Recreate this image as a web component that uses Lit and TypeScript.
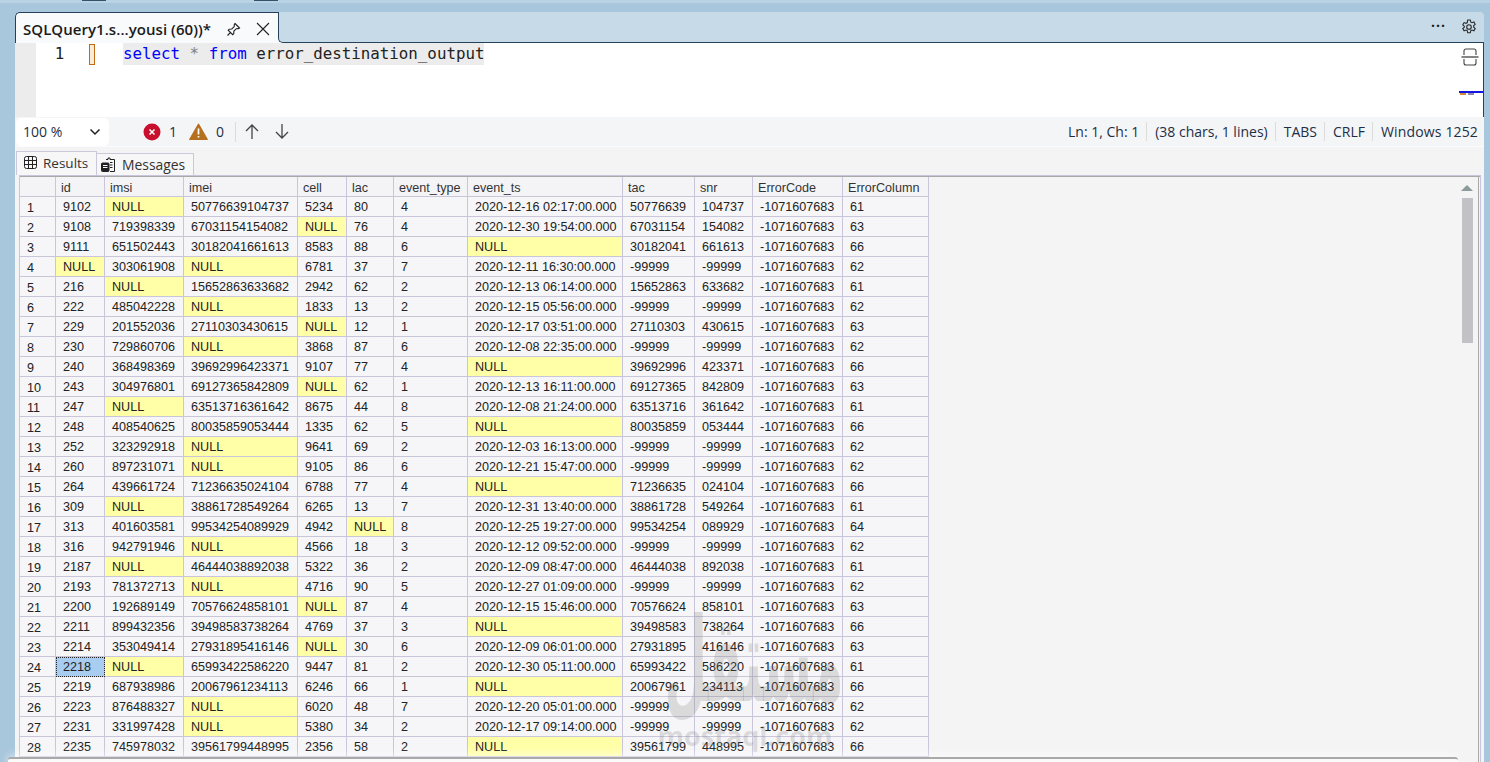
import { LitElement, html, css, svg } from "lit";
import { customElement } from "lit/decorators.js";

const N = "NULL";
const M = "-1071607683";
const rows: string[][] = [
  ["9102",N,"50776639104737","5234","80","4","2020-12-16 02:17:00.000","50776639","104737",M,"61"],
  ["9108","719398339","67031154154082",N,"76","4","2020-12-30 19:54:00.000","67031154","154082",M,"63"],
  ["9111","651502443","30182041661613","8583","88","6",N,"30182041","661613",M,"66"],
  [N,"303061908",N,"6781","37","7","2020-12-11 16:30:00.000","-99999","-99999",M,"62"],
  ["216",N,"15652863633682","2942","62","2","2020-12-13 06:14:00.000","15652863","633682",M,"61"],
  ["222","485042228",N,"1833","13","2","2020-12-15 05:56:00.000","-99999","-99999",M,"62"],
  ["229","201552036","27110303430615",N,"12","1","2020-12-17 03:51:00.000","27110303","430615",M,"63"],
  ["230","729860706",N,"3868","87","6","2020-12-08 22:35:00.000","-99999","-99999",M,"62"],
  ["240","368498369","39692996423371","9107","77","4",N,"39692996","423371",M,"66"],
  ["243","304976801","69127365842809",N,"62","1","2020-12-13 16:11:00.000","69127365","842809",M,"63"],
  ["247",N,"63513716361642","8675","44","8","2020-12-08 21:24:00.000","63513716","361642",M,"61"],
  ["248","408540625","80035859053444","1335","62","5",N,"80035859","053444",M,"66"],
  ["252","323292918",N,"9641","69","2","2020-12-03 16:13:00.000","-99999","-99999",M,"62"],
  ["260","897231071",N,"9105","86","6","2020-12-21 15:47:00.000","-99999","-99999",M,"62"],
  ["264","439661724","71236635024104","6788","77","4",N,"71236635","024104",M,"66"],
  ["309",N,"38861728549264","6265","13","7","2020-12-31 13:40:00.000","38861728","549264",M,"61"],
  ["313","401603581","99534254089929","4942",N,"8","2020-12-25 19:27:00.000","99534254","089929",M,"64"],
  ["316","942791946",N,"4566","18","3","2020-12-12 09:52:00.000","-99999","-99999",M,"62"],
  ["2187",N,"46444038892038","5322","36","2","2020-12-09 08:47:00.000","46444038","892038",M,"61"],
  ["2193","781372713",N,"4716","90","5","2020-12-27 01:09:00.000","-99999","-99999",M,"62"],
  ["2200","192689149","70576624858101",N,"87","4","2020-12-15 15:46:00.000","70576624","858101",M,"63"],
  ["2211","899432356","39498583738264","4769","37","3",N,"39498583","738264",M,"66"],
  ["2214","353049414","27931895416146",N,"30","6","2020-12-09 06:01:00.000","27931895","416146",M,"63"],
  ["2218",N,"65993422586220","9447","81","2","2020-12-30 05:11:00.000","65993422","586220",M,"61"],
  ["2219","687938986","20067961234113","6246","66","1",N,"20067961","234113",M,"66"],
  ["2223","876488327",N,"6020","48","7","2020-12-20 05:01:00.000","-99999","-99999",M,"62"],
  ["2231","331997428",N,"5380","34","2","2020-12-17 09:14:00.000","-99999","-99999",M,"62"],
  ["2235","745978032","39561799448995","2356","58","2",N,"39561799","448995",M,"66"],
];
const heads = ["id","imsi","imei","cell","lac","event_type","event_ts","tac","snr","ErrorCode","ErrorColumn"];
// The 29th row is only a sliver under the bottom panel: its cells are drawn without text.
const sliver = [false,false,true,false,false,false,true,false,false,false,false];

@customElement("app-root")
export class AppRoot extends LitElement {
  static styles = css`
    :host { display: block; width: 1490px; height: 762px; overflow: hidden; position: relative; background: #a8c6dc; font-family: "Open Sans", "Noto Sans", sans-serif; color: #1a1a1a; }
    .top { height: 12px; position: relative; background: linear-gradient(#b9d2e4 0 3px, #a8c6dc 3px); display: flex; }
    .top i { display: block; height: 1px; width: 24px; background: #33536c; }
    .top i:first-child { margin-left: 82px; }
    .top i:last-child { margin-left: 148px; }
    .main { margin: 0 6px 0 15px; height: 750px; display: flex; flex-direction: column; background: #f4f4f4; border-radius: 5px 5px 0 0; }
    .tabbar { height: 31px; flex: none; background: linear-gradient(#c7dae8 50%, #f8fafc 50%); display: flex; align-items: stretch; border-radius: 5px 5px 0 0; }
    .tab { width: 263px; box-sizing: border-box; background: #f8fafc; border: 1px solid #26425a; border-bottom: none; border-right: none; border-radius: 5px 0 0 0; display: flex; align-items: center; padding: 2px 0 0 7px; font-size: 15px; font-weight: 600; letter-spacing: .05px; color: #1b1b1b; white-space: nowrap; position: relative; }
    .tab .pin { margin-left: 15px; }
    .tab .close { margin-left: 15px; }
    .tabfill { flex: 1; display: flex; align-items: center; justify-content: flex-end; gap: 15px; padding: 0 7px 0 0; border-bottom: 1px solid #26425a; border-left: 1px solid #26425a; border-bottom-left-radius: 5px; background: #c7dae8; border-top-right-radius: 5px; }
    .dots { font-size: 14px; letter-spacing: 1px; font-weight: 700; line-height: 10px; margin-bottom: 3px; }
    .editor { height: 74px; flex: none; background: #fff; display: flex; position: relative; border-right: 1px solid #26425a; box-sizing: border-box; }
    .gutter { width: 21px; background: #ececec; flex: none; }
    .lineno { width: 43px; text-align: center; font: 15.8px/22px "DejaVu Sans Mono", monospace; color: #222; height: 22px; box-sizing: border-box; padding-left: 4px; }
    .caret { width: 6px; height: 21px; box-sizing: border-box; border: 1px solid #c46a13; background: #f7ecd9; margin: 1px 0 0 10px; flex: none; }
    .code { margin-left: 28px; height: 22px; font: 15.8px/22px "DejaVu Sans Mono", monospace; background: #ececec; color: #222; white-space: pre; align-self: flex-start; }
    .code b { font-weight: 400; color: #0000ff; }
    .code s { text-decoration: none; color: #808080; }
    .split { position: absolute; right: 4px; top: 5px; }
    .mini { position: absolute; right: 0; top: 48px; width: 24px; height: 2px; background: #1515e0; }
    .mini::after { content: ""; position: absolute; left: 1px; top: 2px; width: 14px; height: 2px; background: linear-gradient(90deg, #d08a3c 0 6px, transparent 6px 8px, #8a8aa8 8px); }
    .status { height: 30px; flex: none; background: #f4f5f7; display: flex; align-items: center; font-size: 14px; color: #1e2f45; border-bottom: 1px solid #f9fbfd; box-sizing: border-box; }
    .zoom { margin-left: 1px; width: 93px; height: 28px; box-sizing: border-box; background: #fff; border-radius: 5px; display: flex; align-items: center; justify-content: space-between; padding: 0 8px 0 7px; }
    .count { display: flex; align-items: center; gap: 8px; }
    .c1 { margin-left: 34px; }
    .c2 { margin-left: 12px; }
    .vsep { width: 1px; height: 20px; background: #dcdcdc; margin: 0 0 0 11px; }
    .arrow { margin-left: 9px; display: flex; }
    .arrow + .arrow { margin-left: 16px; }
    .spacer { flex: 1; }
    .st { padding: 0 7px 0 8px; white-space: nowrap; }
    .st:last-child { padding-right: 6px; letter-spacing: .15px; }
    .st + .st { border-left: 1px solid #dcdcdc; }
    .restabs { height: 28px; flex: none; display: flex; align-items: flex-end; padding-left: 1px; background: #f4f4f4; font-size: 13.5px; color: #333; box-sizing: border-box; }
    .rt { display: flex; align-items: center; box-sizing: border-box; border: 1px solid #c9c9d9; background: #f7f7f7; white-space: nowrap; }
    .rt.on { width: 81px; height: 24px; padding: 0 0 2px 7px; gap: 6px; border-bottom: none; }
    .rt.off { width: 97px; height: 22px; padding: 0 0 0 4px; gap: 7px; border-left: none; border-bottom: none; font-size: 13.9px; }
    .wrap { flex: 1; min-height: 0; margin: 0 3px 0 4px; border: 1px solid #c9c6dc; border-bottom: none; position: relative; display: flex; box-sizing: border-box; box-shadow: inset 0 1px 0 #a9a9a9, inset -1px 0 0 #f4f4f4, inset -2px 0 0 #a9a9a9; }
    .grid { display: grid; grid-template-columns: 36px 49px 79px 114px 49px 47px 74px 155px 72px 58px 90px 86px; grid-auto-rows: 20px; align-content: start; padding-top: 1px; font: 12.6px/20px "Liberation Sans", Arial, sans-serif; color: #222; }
    .hd { box-sizing: border-box; border-right: 1px solid #c9c6dc; border-bottom: 1px solid #c9c6dc; padding-left: 5px; background: #f4f4f7; color: #333; white-space: nowrap; line-height: 22px; }
    .cell { box-sizing: border-box; border-right: 1px solid #c9c6dc; border-bottom: 1px solid #c9c6dc; padding-left: 7px; background: #f6f6f8; white-space: nowrap; overflow: hidden; line-height: 21px; }
    .rowh { padding-left: 7px; line-height: 23px; }
    .null { background: #ffffa8; }
    .sel { background: #a9cdf0; outline: 1px dotted #222; outline-offset: -1px; }
    .sb { position: absolute; right: 7px; top: 0; bottom: 0; width: 12px; }
    .sb .up { width: 0; height: 0; margin: 9px auto 0; border-left: 6px solid transparent; border-right: 6px solid transparent; border-bottom: 6px solid #8b9a9a; }
    .sb .th { margin: 7px 0 0 1px; width: 11px; height: 145px; background: #c1c1c6; }
    .mark { position: absolute; left: 641px; top: 654px; width: 200px; text-align: center; color: rgba(120,120,120,.22); pointer-events: none; }
    .mark .ar { font: 700 49px/68px "DejaVu Sans", sans-serif; transform: translate(13px, -25px) scaleY(2.4); }
    .mark .en { font: 700 27px/28px "Open Sans", sans-serif; margin-left: 8px; }
    .foot { position: absolute; left: 8px; top: 757px; width: 1450px; height: 8px; background: #fafafa; border-top: 2px solid #a9a9a9; border-radius: 3px 3px 0 0; box-shadow: 0 -2px 8px rgba(255,255,255,.6); }
  `;

  private icon(kind: string) {
    switch (kind) {
      case "pin":
        return svg`<svg class="pin" width="15" height="15" viewBox="0 0 15 15" fill="none" stroke="#222" stroke-width="1.1"><path d="M9 1.5l4.5 4.5-1 .6-2.2.1-2.4 2.4-.2 2.6-1 1L2.200 8.200l1-1 2.600-.2 2.400-2.400.1-2.200z"/><path d="M4.500 10.500L1.500 13.500"/></svg>`;
      case "close":
        return svg`<svg class="close" width="14" height="14" viewBox="0 0 14 14" fill="none" stroke="#222" stroke-width="1.100"><path d="M1 1l12 12M13 1L1 13"/></svg>`;
      case "gear":
        return svg`<svg width="16" height="16" viewBox="0 0 16 16" fill="none" stroke="#2a2a2a" stroke-width="1.100"><circle cx="8" cy="8" r="2.300"/><path d="M6.700 1h2.600l.4 2 1.300.7 1.900-.7 1.300 2.300-1.500 1.300v1.600l1.500 1.300-1.300 2.300-1.900-.7-1.300.7-.4 2H6.700l-.4-2-1.300-.7-1.900.7-1.300-2.300 1.500-1.300V7.200L1.800 5.900l1.300-2.300 1.900.7 1.300-.7z"/></svg>`;
      case "split":
        return svg`<svg width="18" height="18" viewBox="0 0 18 18" fill="none" stroke="#444" stroke-width="1.100"><path d="M3 7V3q0-2 2-2h8q2 0 2 2v4M3 11v4q0 2 2 2h8q2 0 2-2v-4"/><path d="M0.500 9h17" stroke="#222"/></svg>`;
      case "chev":
        return svg`<svg width="12" height="8" viewBox="0 0 12 8" fill="none" stroke="#222" stroke-width="1.500"><path d="M1.500 1.500L6 6l4.500-4.500"/></svg>`;
      case "err":
        return svg`<svg width="18" height="18" viewBox="0 0 18 18"><circle cx="9" cy="9" r="8.500" fill="#c8102e"/><path d="M6.500 6.500l5 5M11.500 6.500l-5 5" stroke="#fff" stroke-width="1.500"/></svg>`;
      case "warn":
        return svg`<svg width="19" height="17" viewBox="0 0 19 17"><path d="M9.500 .8L18.500 16.500H.5z" fill="#b5701f" stroke="#b5701f" stroke-linejoin="round"/><path d="M9.500 5.500v6M9.500 13v1.600" stroke="#fff" stroke-width="1.700"/></svg>`;
      case "up":
        return svg`<svg width="14" height="15" viewBox="0 0 14 15" fill="none" stroke="#444" stroke-width="1.300"><path d="M7 15V1M1 7l6-6 6 6"/></svg>`;
      case "down":
        return svg`<svg width="14" height="15" viewBox="0 0 14 15" fill="none" stroke="#444" stroke-width="1.300"><path d="M7 0v14M1 8l6 6 6-6"/></svg>`;
      case "table":
        return svg`<svg width="13" height="13" viewBox="0 0 13 13" fill="none" stroke="#222" stroke-width="1"><rect x=".5" y=".5" width="12" height="12" rx="2"/><path d="M4.500 .5v12M8.500 .5v12M.5 4.500h12M.5 8.500h12"/></svg>`;
      default:
        return svg`<svg width="14" height="15" viewBox="0 0 14 15" fill="none" stroke="#222" stroke-width="1"><path d="M5 2.500h2V1h2v1.500h4.500v12H9"/><path d="M9 5.500h2.500M9 8h2.500M9 10.500h2.500"/><rect x=".5" y="6" width="7.500" height="8.500" rx="1" fill="#222"/><path d="M2 8.500h4.500M2 10.500h4.500" stroke="#fff"/></svg>`;
    }
  }

  render() {
    return html`
      <div class="top"><i></i><i></i></div>
      <div class="main">
        <div class="tabbar">
          <div class="tab">SQLQuery1.s...yousi (60))*${this.icon("pin")}${this.icon("close")}</div>
          <div class="tabfill"><span class="dots">···</span>${this.icon("gear")}</div>
        </div>
        <div class="editor">
          <div class="gutter"></div>
          <div class="lineno">1</div>
          <div class="caret"></div>
          <div class="code"><b>select</b> <s>*</s> <b>from</b> error_destination_output</div>
          <div class="split">${this.icon("split")}</div>
          <div class="mini"></div>
        </div>
        <div class="status">
          <div class="zoom"><span>100 %</span>${this.icon("chev")}</div>
          <div class="count c1">${this.icon("err")}<span>1</span></div>
          <div class="count c2">${this.icon("warn")}<span>0</span></div>
          <div class="vsep"></div>
          <div class="arrow">${this.icon("up")}</div>
          <div class="arrow">${this.icon("down")}</div>
          <div class="spacer"></div>
          <div class="st">Ln: 1, Ch: 1</div>
          <div class="st">(38 chars, 1 lines)</div>
          <div class="st">TABS</div>
          <div class="st">CRLF</div>
          <div class="st">Windows 1252</div>
        </div>
        <div class="restabs">
          <div class="rt on">${this.icon("table")}<span>Results</span></div>
          <div class="rt off">${this.icon("msg")}<span>Messages</span></div>
        </div>
        <div class="wrap">
          <div class="grid">
            <div class="hd"></div>
            ${heads.map((h) => html`<div class="hd">${h}</div>`)}
            ${rows.map((r, i) => html`
              <div class="cell rowh">${i + 1}</div>
              ${r.map((v, j) => html`<div class="cell ${v === N ? "null" : ""} ${i === 23 && j === 0 ? "sel" : ""}">${v}</div>`)}
            `)}
            <div class="cell rowh"></div>
            ${sliver.map((y) => html`<div class="cell ${y ? "null" : ""}"></div>`)}
          </div>
          <div class="sb"><div class="up"></div><div class="th"></div></div>
        </div>
      </div>
      <div class="mark"><div class="ar" dir="rtl" lang="ar">مستقل</div><div class="en">mostaql.com</div></div>
      <div class="foot"></div>
    `;
  }
}
